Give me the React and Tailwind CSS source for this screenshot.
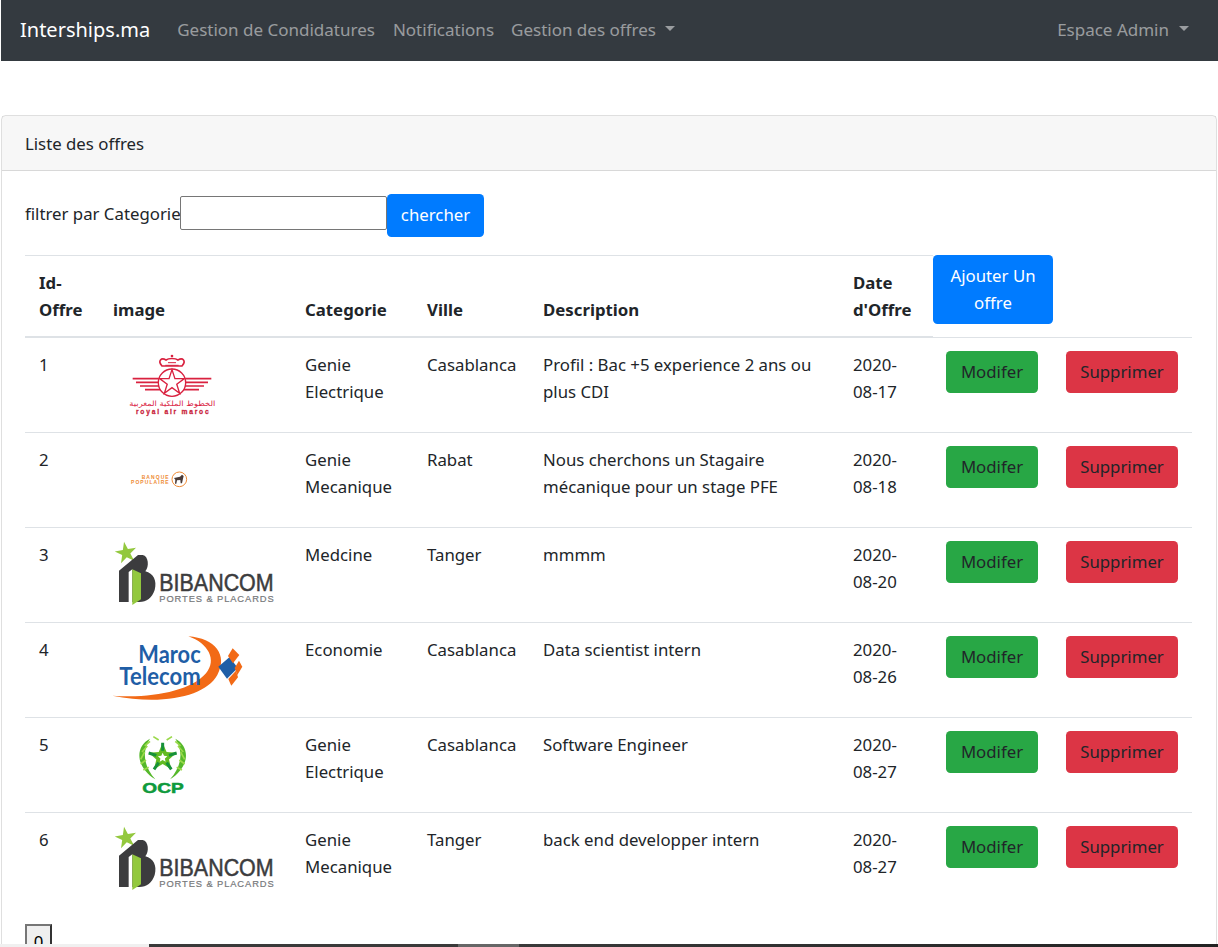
const Caret = ({ className }) => (
  <span className={`mb-[6px] inline-block h-0 w-0 border-x-[5px] border-t-[5.5px] border-x-transparent border-t-[rgba(255,255,255,0.5)] align-middle ${className}`} />
);

const star = (cx, cy, R, r, rot = -90) => {
  const p = [];
  for (let i = 0; i < 10; i++) {
    const a = ((rot + i * 36) * Math.PI) / 180;
    const q = i % 2 ? r : R;
    p.push(`${(cx + q * Math.cos(a)).toFixed(1)},${(cy + q * Math.sin(a)).toFixed(1)}`);
  }
  return p.join(" ");
};

const Logo = ({ children, dy }) => (
  <svg width="165" height="68" viewBox="0 0 165 68" className="block overflow-visible">
    <g transform={`translate(-13 ${dy}) scale(0.3333)`}>{children}</g>
  </svg>
);

const Ram = () => (
  <Logo dy={-11}>
    <g fill="none" stroke="#d9213f">
      <circle cx="216" cy="128" r="41" strokeWidth="4" />
      <polygon points={star(216, 128, 39, 15)} strokeWidth="4" />
      <path d="M186 78 C172 62 184 52 198 60 C206 54 226 54 234 60 C248 52 260 62 246 78 Z" strokeWidth="5" />
      <path d="M196 76 L236 76 M204 68 L228 68" strokeWidth="3" />
      <circle cx="216" cy="48" r="4" fill="#d9213f" strokeWidth="0" />
      <path d="M98 116 L176 116 M108 127 L174 127 M120 138 L176 138 M135 149 L180 149 M256 116 L334 116 M258 127 L324 127 M256 138 L312 138 M252 149 L297 149" strokeWidth="5" />
    </g>
    <text x="346" y="199" textLength="258" lengthAdjust="spacingAndGlyphs" fontSize="22" fill="#d9213f" fontFamily="'DejaVu Sans', sans-serif" direction="rtl">الخطوط الملكية المغربية</text>
    <text x="108" y="223" textLength="218" fontSize="20" fontWeight="700" fill="#c91f3c" stroke="#c91f3c" strokeWidth="0.8" fontFamily="'Liberation Sans', sans-serif">royal air maroc</text>
  </Logo>
);

const Bp = () => (
  <Logo dy={-106}>
    <text x="125" y="416" textLength="81" fontSize="15" fontWeight="700" fill="#ee8a33" fontFamily="'Liberation Sans', sans-serif">BANQUE</text>
    <text x="93" y="431" textLength="113" fontSize="15" fontWeight="700" fill="#ee8a33" fontFamily="'Liberation Sans', sans-serif">POPULAIRE</text>
    <circle cx="238" cy="418" r="22" fill="#fff" stroke="#ee8a33" strokeWidth="3" />
    <path d="M222 414 L240 410 L246 404 L251 408 L249 416 L246 430 L242 430 L241 420 L231 421 L229 431 L225 431 L226 419 Z" fill="#4a3a36" />
  </Logo>
);

const Bibancom = () => (
  <Logo dy={-11}>
    <polygon points={star(78, 69, 34, 13, -100)} fill="#93c83e" />
    <path d="M57 122 L114 75 L128 75 C146 78 148 110 136 124 C160 130 172 152 164 180 C156 204 140 216 118 216 L57 216 Z" fill="#3c3c3e" />
    <path d="M86 126 L97 118 L97 216 L86 216 Z" fill="#fff" />
    <path d="M97 118 L123 130 L123 208 L97 225 Z" fill="#93c83e" />
    <text x="178" y="182" textLength="343" lengthAdjust="spacingAndGlyphs" fontSize="72" fill="#3c3c3e" stroke="#3c3c3e" strokeWidth="1.5" fontFamily="'Liberation Sans', sans-serif">BIBANCOM</text>
    <text x="178" y="216" textLength="343" fontSize="28" fill="#77797b" stroke="#77797b" strokeWidth="0.6" fontFamily="'Liberation Sans', sans-serif">PORTES &amp; PLACARDS</text>
  </Logo>
);

const Telecom = () => (
  <Logo dy={-106}>
    <path d="M265 319 C345 325 385 375 352 435 C318 498 190 528 37 497 C150 506 270 485 318 430 C352 390 325 340 265 319 Z" fill="#f26a16" />
    <polygon points="355,410 389,381 413,414 381,446" fill="#1f5ea6" />
    <polygon points="398,355 418,375 399,400 384,378" fill="#f26a16" />
    <polygon points="417,392 427,410 412,435 404,414" fill="#f26a16" />
    <polygon points="385,447 408,422 414,442 394,467" fill="#f26a16" />
    <text x="115" y="398" textLength="187" lengthAdjust="spacingAndGlyphs" fontSize="72" fontWeight="700" fill="#1f5ea6" fontFamily="Lato, sans-serif">Maroc</text>
    <text x="58" y="464" textLength="244" lengthAdjust="spacingAndGlyphs" fontSize="72" fontWeight="700" fill="#1f5ea6" fontFamily="Lato, sans-serif">Telecom</text>
  </Logo>
);

const Ocp = () => (
  <Logo dy={-11}>
    <path d="M150 56 C106 78 104 140 166 178 C132 140 124 96 150 56 Z" fill="#55b82a" />
    <path d="M226 56 C270 78 272 140 210 178 C244 140 252 96 226 56 Z" fill="#55b82a" />
    <path d="M122 118 L134 96 M126 96 L142 78 M134 78 L150 64 M122 132 L138 120 M130 150 L146 142 M254 118 L242 96 M250 96 L234 78 M242 78 L226 64 M254 132 L238 120 M246 150 L230 142 M160 50 L176 60 M216 50 L200 60" stroke="#9ad94a" strokeWidth="5" fill="none" />
    <polygon points={star(188, 112, 44, 20)} fill="#63bb22" />
    <path d="M188 68 L188 92 M146 99 L169 106 M162 148 L176 128 M214 148 L200 128 M230 99 L207 106" stroke="#16913a" strokeWidth="9" fill="none" />
    <polygon points={star(188, 113, 15, 7)} fill="#fff" />
    <text x="127" y="220" textLength="124" lengthAdjust="spacingAndGlyphs" fontSize="42" fontWeight="700" fill="#0f9a3c" stroke="#0f9a3c" strokeWidth="1.5" fontFamily="'Liberation Sans', sans-serif">OCP</text>
  </Logo>
);

const rows = [
  { id: 1, logo: <Ram />, cat: "Genie Electrique", ville: "Casablanca", desc: "Profil : Bac +5 experience 2 ans ou plus CDI", date: "2020-08-17" },
  { id: 2, logo: <Bp />, cat: "Genie Mecanique", ville: "Rabat", desc: "Nous cherchons un Stagaire mécanique pour un stage PFE", date: "2020-08-18" },
  { id: 3, logo: <Bibancom />, cat: "Medcine", ville: "Tanger", desc: "mmmm", date: "2020-08-20" },
  { id: 4, logo: <Telecom />, cat: "Economie", ville: "Casablanca", desc: "Data scientist intern", date: "2020-08-26" },
  { id: 5, logo: <Ocp />, cat: "Genie Electrique", ville: "Casablanca", desc: "Software Engineer", date: "2020-08-27" },
  { id: 6, logo: <Bibancom />, cat: "Genie Mecanique", ville: "Tanger", desc: "back end developper intern", date: "2020-08-27" },
];

const pad = ["pl-[14px]", "pl-[13px]", "pl-[14px]", "pl-[14px]", "pl-[13px]", "pl-[13px]"];
const th = "pr-[13px] pb-[13px] pt-[13px] align-bottom text-left font-bold border-t border-b-2 border-t-[#dee2e6] border-b-[#dee2e6]";
const td = "pr-[13px] pt-[13px] align-top";
const sep = "border-t border-t-[#dee2e6]";

export default function App() {
  return (
    <div className="relative h-[947px] overflow-hidden bg-white pl-px font-['Noto_Sans',sans-serif] text-[16.8px] leading-[27px] text-[#212529]">
      <nav className="flex h-[61px] items-center justify-between bg-[#343a40] pb-[2px] pl-[19px] pr-[29px] text-[17px]">
        <div className="flex items-center">
          <a className="mr-[27px] text-[20px] text-white">Interships.ma</a>
          <a className="mr-[18px] text-[rgba(255,255,255,0.5)]">Gestion de Condidatures</a>
          <a className="mr-[17px] text-[rgba(255,255,255,0.5)]">Notifications</a>
          <a className="text-[rgba(255,255,255,0.5)]">Gestion des offres<Caret className="ml-[9px]" /></a>
        </div>
        <a className="text-[rgba(255,255,255,0.5)]">Espace Admin<Caret className="ml-[10px]" /></a>
      </nav>

      <section className="mt-[54px] w-[1216px] rounded-[4.5px] border border-[rgba(0,0,0,0.125)]">
        <header className="flex h-[55px] items-center border-b border-[rgba(0,0,0,0.125)] bg-[rgba(0,0,0,0.03)] px-[23px]">
          Liste des offres
        </header>
        <div className="px-[23px] pt-[23px]">
          <div className="mb-[18px] flex h-[43px] items-center">
            <label className="mb-[5px] w-[155px] whitespace-nowrap">filtrer par Categorie</label>
            <input className="mb-[6px] h-[34px] w-[207px] rounded-[2px] border border-[#767676]" />
            <button className="h-[43px] w-[97px] rounded-[4.5px] bg-[#007bff] pb-[2px] text-white">chercher</button>
          </div>

          <table className="mb-[17px] w-[1167px] table-fixed border-separate border-spacing-0">
            <colgroup>
              <col className="w-[75px]" />
              <col className="w-[191px]" />
              <col className="w-[122px]" />
              <col className="w-[117px]" />
              <col className="w-[310px]" />
              <col className="w-[93px]" />
              <col className="w-[120px]" />
              <col className="w-[139px]" />
            </colgroup>
            <thead>
              <tr>
                {["Id-Offre", "image", "Categorie", "Ville", "Description", "Date d'Offre"].map((h, j) => (
                  <th key={h} className={`${th} ${pad[j]}`}>{h}</th>
                ))}
                <th className="border-b border-b-[#dee2e6] p-0 align-top">
                  <button className="h-[69px] w-[120px] rounded-[4.5px] bg-[#007bff] px-[13px] pb-[2px] font-normal text-white">Ajouter Un offre</button>
                </th>
                <th className="border-b border-b-[#dee2e6] p-0" />
              </tr>
            </thead>
            <tbody>
              {rows.map((r, i) => (
                <tr key={r.id} className={i === 0 ? "h-[94px]" : "h-[95px]"}>
                  {[r.id, r.logo, r.cat, r.ville, r.desc, r.date].map((c, j) => (
                    <td key={j} className={`${td} ${pad[j]} ${i === 0 ? "" : sep}`}>{c}</td>
                  ))}
                  <td className={`${td} pl-[13px] ${i === 0 ? "" : sep}`}>
                    <button className="h-[42px] w-[92px] rounded-[4.5px] bg-[#28a745] pb-[2px] text-[#212529]">Modifer</button>
                  </td>
                  <td className={`${td} pl-[13px] ${i === 0 ? "" : sep}`}>
                    <button className="h-[42px] w-[112px] rounded-[4.5px] bg-[#dc3545] pb-[2px] text-[#212529]">Supprimer</button>
                  </td>
                </tr>
              ))}
            </tbody>
          </table>

          <button className="h-[34px] w-[27px] border-2 border-b-[#333333] border-l-[#767676] border-r-[#333333] border-t-[#767676] bg-[#efefef] text-black">0</button>
        </div>
      </section>

      <div className="absolute bottom-0 left-0 flex h-[3px] w-full">
        <div className="w-[149px] bg-[#f0f0f0]" />
        <div className="w-[309px] bg-[#3a3a3a]" />
        <div className="w-[61px] bg-[#666666]" />
        <div className="flex-1 bg-gradient-to-r from-[#3a3a3a] to-[#222222]" />
      </div>
    </div>
  );
}
